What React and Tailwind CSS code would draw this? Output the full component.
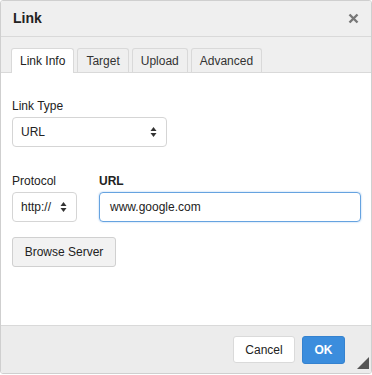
import React from "react";

const Arrows = () => (
  <svg width="7" height="12" viewBox="0 0 7 12" className="shrink-0">
    <path d="M3.5 1 L6.5 5 L0.5 5 Z" fill="#333" />
    <path d="M3.5 11 L6.5 7 L0.5 7 Z" fill="#333" />
  </svg>
);

const FakeSelect = ({ value, width }) => (
  <div
    className={`${width} h-[30px] flex items-center justify-between pl-[8px] pr-[9px] border border-[#d5d5d5] rounded-[4px] bg-white text-[12px] text-[#222]`}
  >
    <span>{value}</span>
    <Arrows />
  </div>
);

const tabs = ["Link Info", "Target", "Upload", "Advanced"];

export default function App() {
  return (
    <div className="w-[372px] h-[375px] bg-white">
      <div
        className="w-[372px] h-[374px] flex flex-col border border-[#cfcfcf] rounded-[3px] overflow-hidden bg-white text-[#333]"
        style={{ fontFamily: '"Liberation Sans", Arial, sans-serif' }}
      >
        {/* header */}
        <div className="h-[36px] shrink-0 flex items-center justify-between pl-[12px] pr-[12px] bg-[#efefef] border-b border-[#d9d9d9]">
          <span className="text-[14px] font-bold text-[#222]">Link</span>
          <svg width="11" height="11" viewBox="0 0 11 11">
            <path d="M1.5 1.5 L9.5 9.5 M9.5 1.5 L1.5 9.5" stroke="#777" strokeWidth="2.4" />
          </svg>
        </div>

        {/* tabs */}
        <div className="h-[36px] shrink-0 flex items-end gap-[3px] pl-[10px] bg-[#efefef] border-b border-[#d9d9d9]">
          {tabs.map((t, i) => (
            <div
              key={t}
              className={
                i === 0
                  ? "h-[25px] -mb-px px-[8px] flex items-center bg-white border border-b-0 border-[#d9d9d9] rounded-t-[3px] text-[12px] text-[#222]"
                  : "h-[24px] px-[8px] flex items-center bg-[#efefef] border border-b-0 border-[#d9d9d9] rounded-t-[3px] text-[12px] text-[#333]"
              }
            >
              {t}
            </div>
          ))}
        </div>

        {/* content */}
        <div className="flex-1 px-[11px] pt-[25px]">
          <div className="text-[12px] text-[#222] leading-[16px] mb-[3px]">Link Type</div>
          <FakeSelect value="URL" width="w-[155px]" />

          <div className="flex gap-[22px] mt-[26px]">
            <div>
              <div className="text-[12px] text-[#222] leading-[16px] mb-[3px]">Protocol</div>
              <FakeSelect value="http://" width="w-[65px]" />
            </div>
            <div className="flex-1">
              <div className="text-[12px] font-bold text-[#222] leading-[16px] mb-[3px]">URL</div>
              <div className="w-[262px] h-[30px] flex items-center px-[10px] border border-[#66a3e0] rounded-[4px] shadow-[0_0_2px_#9ec5ee] text-[12px] text-[#222]">
                www.google.com
              </div>
            </div>
          </div>

          <button className="mt-[15px] w-[104px] h-[30px] flex items-center justify-center bg-[#f2f2f2] border border-[#d0d0d0] rounded-[3px] text-[12px] text-[#222]">
            Browse Server
          </button>
        </div>

        {/* footer */}
        <div className="h-[48px] shrink-0 relative flex items-center justify-end gap-[7px] pr-[26px] bg-[#ececec] border-t border-[#d9d9d9]">
          <button className="w-[62px] h-[27px] flex items-center justify-center bg-white border border-[#dadada] rounded-[3px] text-[12px] text-[#222]">
            Cancel
          </button>
          <button className="w-[43px] h-[28px] flex items-center justify-center bg-[#3b8ddd] border border-[#3582cf] rounded-[3px] text-[12px] font-bold text-white">
            OK
          </button>
          <svg width="12" height="12" viewBox="0 0 12 12" className="absolute right-[2px] bottom-[4px]">
            <path d="M12 0 L12 12 L0 12 Z" fill="#555" />
          </svg>
        </div>
      </div>
    </div>
  );
}
